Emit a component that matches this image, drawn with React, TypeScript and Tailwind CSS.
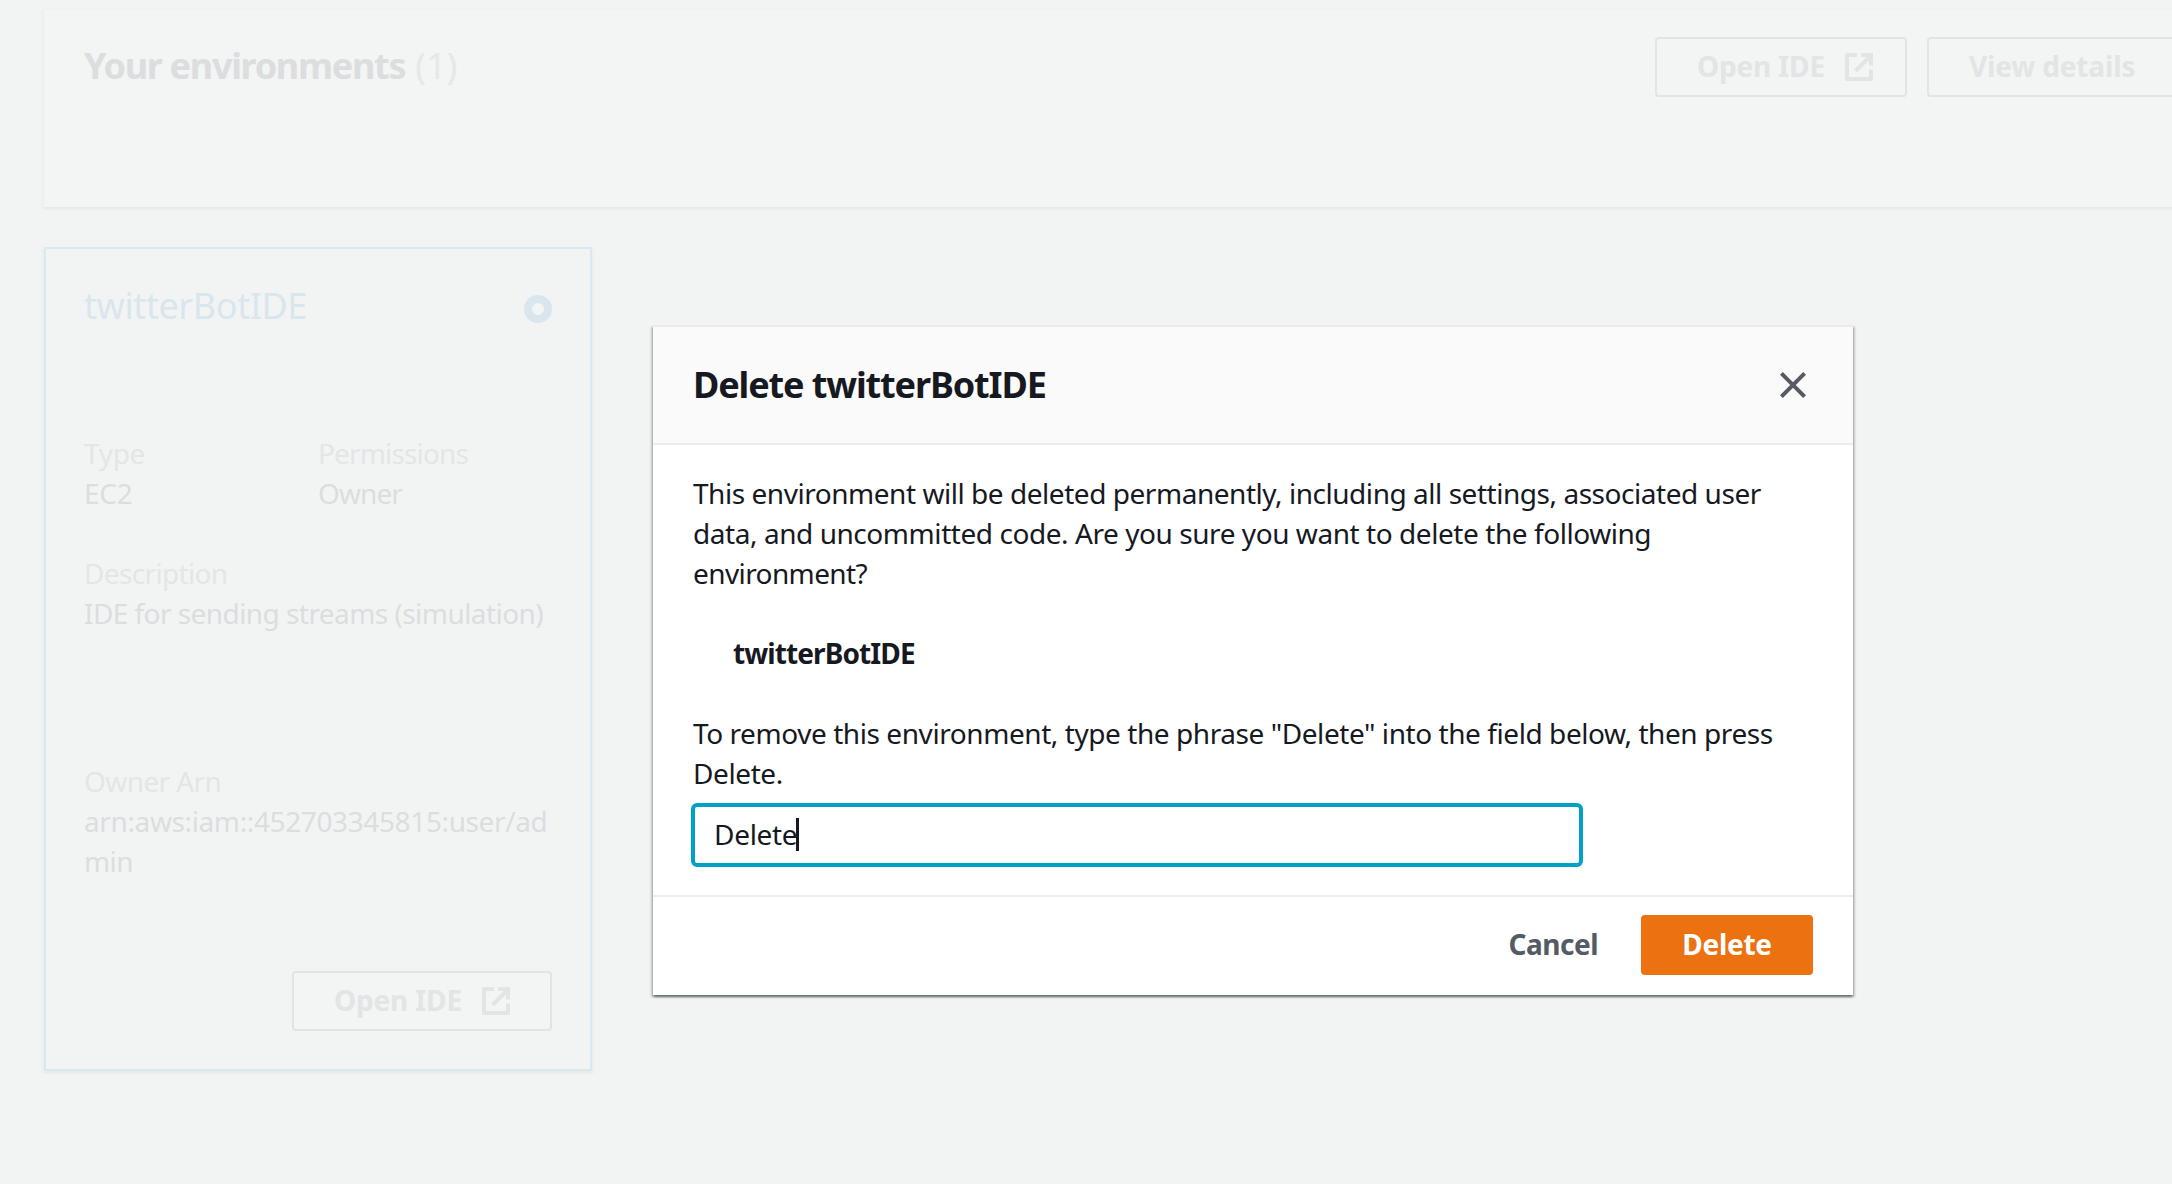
import type { ReactNode } from "react";

function ExternalIcon() {
  return (
    <svg className="size-7 shrink-0" viewBox="0 0 28 28" fill="none" stroke="#e2e4e5" strokeWidth="4">
      <path d="M12 2H2v24h24v-9.5" strokeLinejoin="round" />
      <path d="M16 2h10v10.5" />
      <path d="M10.5 18 25 3.5" />
    </svg>
  );
}

function OutlineButton({ children, className }: { children: ReactNode; className: string }) {
  return (
    <button
      className={`flex h-[60px] shrink-0 items-center rounded-[4px] border-2 border-[#e2e4e4] bg-[#f3f4f4] text-left text-[28px] leading-10 font-bold whitespace-nowrap text-[#e2e4e5] ${className}`}
    >
      {children}
    </button>
  );
}

function Field({ label, labelClass, children }: { label: string; labelClass: string; children: ReactNode }) {
  return (
    <div className="text-[28px] leading-10 whitespace-nowrap text-[#dbdddf]">
      <div className={`text-[#e3e5e6] ${labelClass}`}>{label}</div>
      {children}
    </div>
  );
}

function EnvironmentsHeader() {
  return (
    <header className="ml-11 flex h-[199px] w-[2200px] items-start border-t-2 border-[#f0f2f2] bg-[#f3f4f4] pl-10 shadow-[0_2px_2px_0_#e6e9e8,-2px_2px_2px_0_#eef0f0]">
      <h1 className="mt-[31px] w-[1571px] text-[36px] leading-[50px] whitespace-nowrap">
        <span className="font-bold tracking-[-1.3px] text-[#dbdddf]">Your environments</span>
        <span className="ml-[10px] text-[#e6e8e8]">(1)</span>
      </h1>
      <div className="mt-[27px] flex gap-5">
        <OutlineButton className="w-[252px] pl-10">
          <span className="w-[148px] pb-[2px] tracking-[-0.15px]">Open IDE</span>
          <ExternalIcon />
        </OutlineButton>
        <OutlineButton className="w-[260px] pl-10">
          <span className="pb-[2px] tracking-[-0.15px]">View details</span>
        </OutlineButton>
      </div>
    </header>
  );
}

function EnvironmentCard() {
  return (
    <section className="mt-10 ml-11 h-[824px] w-[548px] border-2 border-[#d9eaef] bg-[#f2f4f4] px-[38px] shadow-[0_2px_2px_0_#e8ebea,2px_2px_2px_0_#eceeee,-2px_2px_2px_0_#eceeee]">
      <div className="mt-[32px] flex items-center justify-between">
        <h2 className="text-[36px] leading-[50px] tracking-[-0.42px] text-[#d9e6ee]">twitterBotIDE</h2>
        <span className="mt-[6px] size-7 rounded-full border-[8.5px] border-[#d9e6ee] bg-[#f3f4f4]" />
      </div>
      <div className="mt-[102px] flex">
        <div className="w-[234px]">
          <Field label="Type" labelClass="tracking-[-0.3px]">
            <div className="tracking-[-0.2px]">EC2</div>
          </Field>
        </div>
        <Field label="Permissions" labelClass="tracking-[-0.85px]">
          <div className="tracking-[-0.9px]">Owner</div>
        </Field>
      </div>
      <div className="mt-10">
        <Field label="Description" labelClass="tracking-[-0.65px]">
          <div className="tracking-[-0.56px]">IDE for sending streams (simulation)</div>
        </Field>
      </div>
      <div className="mt-[128px]">
        <Field label="Owner Arn" labelClass="tracking-[-0.6px]">
          <div className="tracking-[-0.38px]">arn:aws:iam::452703345815:user/ad</div>
          <div className="tracking-[-0.6px]">min</div>
        </Field>
      </div>
      <div className="mt-[90px] flex justify-end">
        <OutlineButton className="w-[260px] pl-10">
          <span className="w-[148px] pb-[2px] tracking-[-0.15px]">Open IDE</span>
          <ExternalIcon />
        </OutlineButton>
      </div>
    </section>
  );
}

function DeleteDialog() {
  return (
    <div
      role="dialog"
      className="absolute top-[325px] left-[653px] flex w-[1200px] flex-col border-t-2 border-[#e8eceb] bg-white text-[28px] leading-10 whitespace-nowrap text-[#16191f] shadow-[0_2px_2px_0_rgba(0,28,36,0.4),2px_2px_2px_0_rgba(0,28,36,0.18),-2px_2px_2px_0_rgba(0,28,36,0.18)]"
    >
      <div className="flex h-[118px] items-center justify-between border-b-2 border-[#eaeded] bg-[#fafafa] pr-[47px] pl-10">
        <h2 className="text-[36px] leading-[50px] font-bold tracking-[-1.12px]">Delete twitterBotIDE</h2>
        <svg className="size-[26px]" viewBox="0 0 26 26" stroke="#545b64" strokeWidth="4">
          <path d="M1.4 1.4 24.6 24.6M24.6 1.4 1.4 24.6" />
        </svg>
      </div>
      <div className="px-10 py-7">
        <p>
          <span className="block tracking-[-0.46px]">
            This environment will be deleted permanently, including all settings, associated user
          </span>
          <span className="block tracking-[-0.44px]">
            data, and uncommitted code. Are you sure you want to delete the following
          </span>
          <span className="block tracking-[-0.6px]">environment?</span>
        </p>
        <p className="my-10 pl-10 font-bold tracking-[-0.9px]">twitterBotIDE</p>
        <p>
          <span className="block tracking-[-0.43px]">
            To remove this environment, type the phrase &quot;Delete&quot; into the field below, then press
          </span>
          <span className="block tracking-[-0.4px]">Delete.</span>
        </p>
        <div className="mt-[10px] -ml-[2px] flex h-16 w-[892px] items-center rounded-[6px] border-4 border-[#00a1c9] pb-[2px] pl-[19px]">
          <span className="tracking-[-0.3px]">Delete</span>
          <span className="-ml-[1px] h-[33px] w-[2.5px] bg-[#16191f]" />
        </div>
      </div>
      <div className="flex h-[100px] items-center justify-end border-t-2 border-[#eaeded] pr-10 pb-[2px] font-bold">
        <button className="mr-[43px] pb-[2px] tracking-[-0.5px] text-[#545b64]">Cancel</button>
        <button className="h-[60px] w-[172px] rounded-[4px] bg-[#ec7211] pb-[2px] tracking-[-0.3px] text-white">
          Delete
        </button>
      </div>
    </div>
  );
}

export default function App() {
  return (
    <main className="relative h-[1184px] w-[2172px] overflow-hidden bg-[#f2f3f3] pt-2 font-['Noto_Sans',sans-serif]">
      <EnvironmentsHeader />
      <EnvironmentCard />
      <DeleteDialog />
    </main>
  );
}
